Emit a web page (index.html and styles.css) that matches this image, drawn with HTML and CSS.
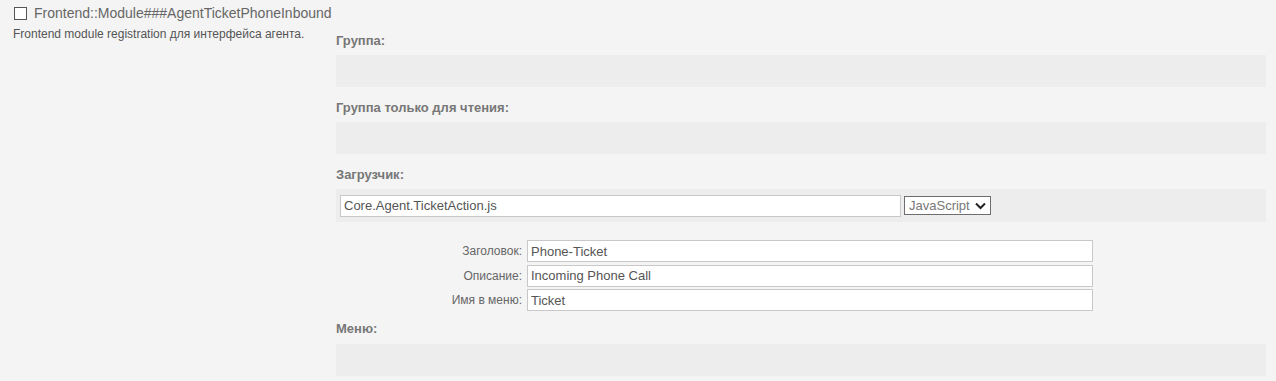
FILE: index.html
```html
<!DOCTYPE html>
<html lang="ru">
<head>
<meta charset="utf-8">
<title>Frontend::Module###AgentTicketPhoneInbound</title>
<link rel="stylesheet" href="styles.css">
</head>
<body>
<div class="setting">
  <div class="setting-head">
    <div class="title">
      <span class="checkbox"></span>
      <span class="name">Frontend::Module###AgentTicketPhoneInbound</span>
    </div>
    <div class="desc">Frontend module registration для интерфейса агента.</div>
  </div>
  <div class="setting-body">
    <div class="label first">Группа:</div>
    <div class="box"></div>

    <div class="label">Группа только для чтения:</div>
    <div class="box"></div>

    <div class="label">Загрузчик:</div>
    <div class="box loader">
      <input class="field loader-input" type="text" value="Core.Agent.TicketAction.js">
      <div class="select">JavaScript
        <svg class="chev" width="11" height="8" viewBox="0 0 11 8"><path d="M1 1.5 L5.5 6 L10 1.5" fill="none" stroke="#222" stroke-width="2"/></svg>
      </div>
    </div>

    <div class="rows">
      <div class="row"><span class="row-label">Заголовок:</span><input class="field row-input" type="text" value="Phone-Ticket"></div>
      <div class="row"><span class="row-label">Описание:</span><input class="field row-input" type="text" value="Incoming Phone Call"></div>
      <div class="row"><span class="row-label">Имя в меню:</span><input class="field row-input" type="text" value="Ticket"></div>
    </div>

    <div class="label menu">Меню:</div>
    <div class="box"></div>
  </div>
</div>
</body>
</html>
```

FILE: styles.css
```css
html, body {
  margin: 0;
  padding: 0;
  background: #f4f4f4;
  font-family: "Liberation Sans", Arial, sans-serif;
  color: #666;
}

.setting {
  display: flex;
  width: 1276px;
  height: 381px;
  overflow: hidden;
}

.setting-head {
  width: 323px;
  padding-left: 13px;
  flex: none;
}

.title {
  display: flex;
  align-items: center;
  height: 16px;
  margin-top: 5px;
}

.checkbox {
  width: 11px;
  height: 11px;
  border: 1px solid #555;
  background: #fff;
  margin-left: 1px;
  margin-right: 7px;
  flex: none;
}

.name {
  font-size: 14px;
  color: #666;
  white-space: nowrap;
}

.desc {
  font-size: 12px;
  line-height: 14px;
  margin-top: 6px;
  color: #555;
  white-space: nowrap;
}

.setting-body {
  width: 930px;
  flex: none;
}

.label {
  font-size: 13px;
  font-weight: bold;
  color: #777;
  line-height: 15px;
  margin-top: 13px;
  margin-bottom: 7px;
}

.label.first {
  margin-top: 33px;
}

.box {
  background: #ededed;
  height: 32px;
}

.box.loader {
  height: 33px;
  display: flex;
  align-items: center;
  padding-left: 4px;
  box-sizing: border-box;
}

.field {
  box-sizing: border-box;
  height: 22px;
  border: 1px solid #c8c8c8;
  background: #fff;
  font-family: "Liberation Sans", Arial, sans-serif;
  font-size: 13px;
  color: #555;
  padding: 0 3px;
  margin: 0;
  outline: none;
}

.loader-input {
  width: 561px;
}

.select {
  box-sizing: border-box;
  margin-left: 3px;
  width: 87px;
  height: 19px;
  border: 1px solid #6e6e6e;
  background: #fff;
  font-size: 13px;
  color: #777;
  display: flex;
  align-items: center;
  padding-left: 4px;
  gap: 5px;
  white-space: nowrap;
}

.chev {
  flex: none;
}

.rows {
  margin-top: 18px;
  display: flex;
  flex-direction: column;
  gap: 2.5px;
}

.row {
  display: flex;
  align-items: center;
  height: 22px;
}

.row-label {
  width: 186px;
  text-align: right;
  font-size: 12px;
  color: #666;
  padding-right: 5px;
}

.row-input {
  width: 566px;
}

.label.menu {
  margin-top: 10px;
  margin-bottom: 8px;
}
```
